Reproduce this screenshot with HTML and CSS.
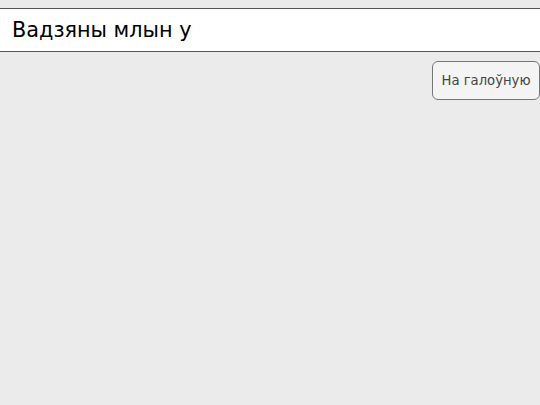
FILE: index.html
```html
<!DOCTYPE html>
<html lang="be">
<head>
  <meta charset="UTF-8">
  <title>Вадзяны млын у</title>
  <link rel="stylesheet" href="styles.css">
</head>
<body>
  <!-- Header -->
  <div class="header">
    <div class="title">Вадзяны млын у</div>
  </div>

  <!-- Actions -->
  <div class="actions">
    <button class="home-button">На галоўную</button>
  </div>
</body>
</html>
```

FILE: styles.css
```css
html, body {
  margin: 0;
  padding: 0;
  height: 100%;
  font-family: "DejaVu Sans", sans-serif;
}

body {
  background-color: #ebebeb;
  padding-top: 8px;
  box-sizing: border-box;
}

.header {
  background-color: #ffffff;
  border-top: 1px solid #555;
  border-bottom: 1px solid #555;
  height: 42px;
  display: flex;
  align-items: center;
  padding-left: 12px;
}

.title {
  font-size: 20.8px;
  color: #000;
}

.actions {
  display: flex;
  justify-content: flex-end;
  padding-top: 9px;
}

.home-button {
  width: 108px;
  height: 39px;
  background-color: #f4f4f4;
  border: 1px solid #777;
  border-radius: 6px;
  font-family: "DejaVu Sans", sans-serif;
  font-size: 13.2px;
  color: #444;
  padding: 0;
  cursor: pointer;
}
```
